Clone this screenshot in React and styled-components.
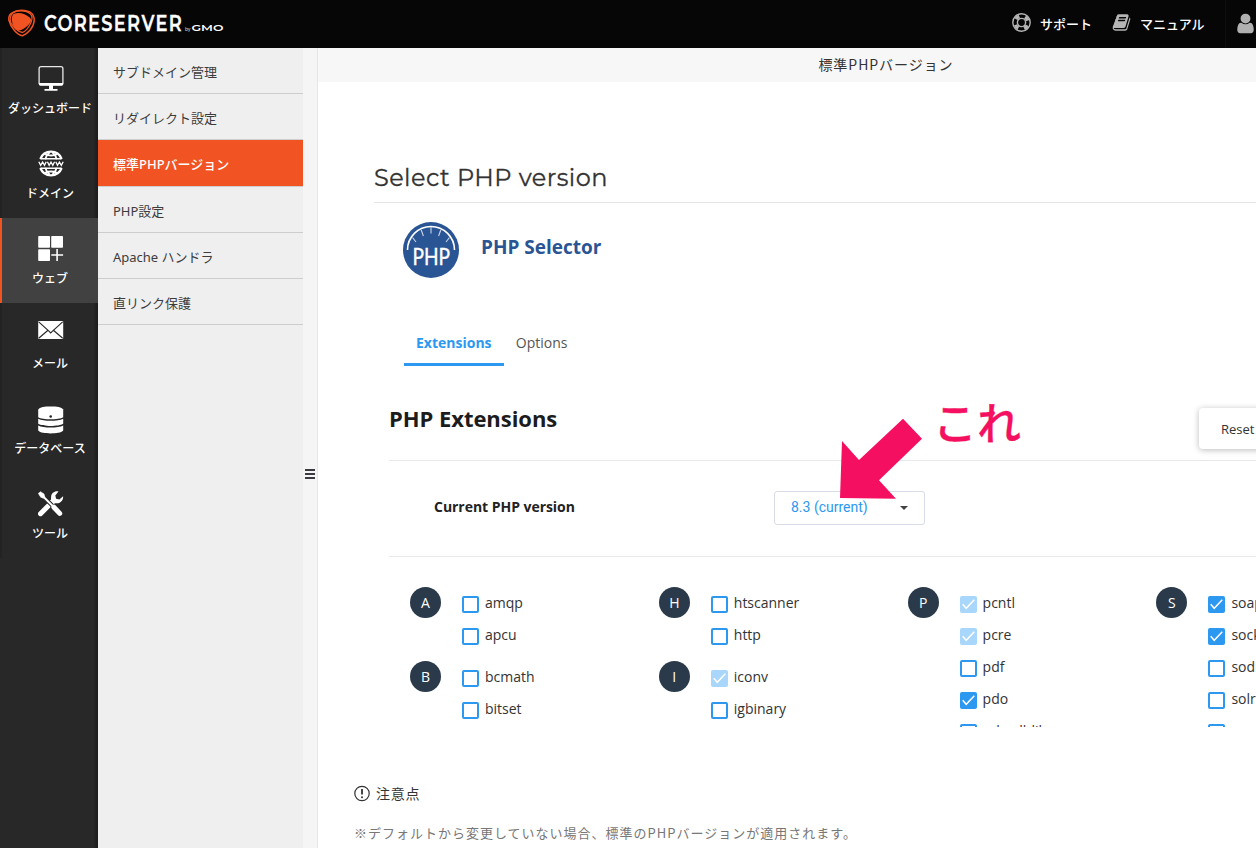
import React from "react";
import styled, { createGlobalStyle, css } from "styled-components";

const Global = createGlobalStyle`
  *, *::before, *::after { box-sizing: border-box; }
  html, body { margin: 0; padding: 0; overflow: hidden; }
  body {
    background: #fff;
    color: #333;
    font-family: "Noto Sans CJK JP", sans-serif;
    font-size: 13px;
  }
`;

const openSans = css`font-family: "Open Sans", "Noto Sans CJK JP", sans-serif;`;

const Page = styled.div`
  position: relative;
  width: 1256px;
  height: 848px;
  overflow: hidden;
  display: flex;
  flex-direction: column;
`;

/* ---------- top bar ---------- */
const TopBar = styled.header`
  flex: none;
  height: 48px;
  background: #060606;
  display: flex;
  align-items: center;
  padding-left: 7px;
`;
const TopLinks = styled.nav`
  margin-left: auto;
  width: 244px;
  height: 48px;
  flex: none;
  display: flex;
  overflow: hidden;
`;
const TopLink = styled.a`
  flex: none;
  display: flex;
  align-items: center;
  width: ${(p) => p.$width}px;
  gap: ${(p) => p.$gap}px;
  color: #fff;
  font-weight: 500;
  font-size: 13px;
  line-height: 48px;
  white-space: nowrap;
  svg { flex: none; position: relative; top: -1.5px; }
`;
const UserBox = styled.div`
  flex: none;
  height: 48px;
  width: 60px;
  padding: 12px 0 0 8px;
  border-left: 1px solid #0a0f18;
`;

/* ---------- columns ---------- */
const Body = styled.div`
  flex: 1;
  display: flex;
  min-height: 0;
`;
const SideNav = styled.nav`
  flex: none;
  width: 98px;
  background: linear-gradient(to left, #1b1b1b, #282828 5px);
`;
const SideItem = styled.a`
  display: flex;
  flex-direction: column;
  align-items: center;
  height: 85px;
  border-left: 2px solid ${(p) => (p.$active ? "#f15322" : "#232323")};
  background: ${(p) => (p.$active ? "#414141" : "transparent")};
  color: #fff;
  font-size: 12px;
  font-weight: 500;
  line-height: 18px;
  white-space: nowrap;
`;
const SideIcon = styled.span`
  height: 51px;
  padding: 17px 0 0 1px;
  svg { display: block; }
`;
const SubNav = styled.nav`
  flex: none;
  width: 205px;
  background: #efefef;
`;
const SubItem = styled.a`
  display: block;
  height: ${(p) => (p.$active ? 47 : 46)}px;
  padding-left: 15px;
  border-bottom: 1px solid #cdcdcd;
  background: ${(p) => (p.$active ? "#f15322" : "transparent")};
  color: ${(p) => (p.$active ? "#fff" : "#3c3c3c")};
  font-family: "Noto Sans", "Noto Sans CJK JP", sans-serif;
  font-weight: ${(p) => (p.$active ? 500 : 400)};
  font-size: 13px;
  line-height: 48px;
`;
const Handle = styled.div`
  flex: none;
  width: 15px;
  padding-left: 2px;
  background: #f5f5f5;
  border-right: 1px solid #e6e6e8;
  display: flex;
  flex-direction: column;
  padding-top: 421px;
  gap: 2px;
`;
const HandleBar = styled.i`
  display: block;
  width: 10px;
  height: 2px;
  background: #3a3a40;
`;

/* ---------- main ---------- */
const Main = styled.main`
  flex: none;
  width: 1136px;
  background: #fff;
`;
const TitleBar = styled.div`
  height: 34px;
  background: #f7f7f7;
  text-align: center;
  font-size: 14px;
  line-height: 33px;
  letter-spacing: 0.95px;
`;
const Frame = styled.section`
  height: 645px;
  padding: 74px 0 0 56px;
  overflow: hidden;
`;
const PageHeading = styled.h1`
  margin: 0;
  height: 47px;
  border-bottom: 1px solid #e3e3e8;
  font-family: Montserrat, Inter, sans-serif;
  font-weight: 400;
  font-size: 24px;
  line-height: 44px;
  letter-spacing: 0.43px;
  color: #333;
  -webkit-text-stroke: 0.3px #333;
`;
const Plugin = styled.div`
  display: flex;
  padding: 19px 0 0 29px;
  height: 122px;
`;
const PluginName = styled.h2`
  ${openSans}
  margin: 10px 0 0 22px;
  font-size: 19px;
  line-height: 30px;
  font-weight: 700;
  color: #2a5594;
`;
const Tabs = styled.div`
  display: flex;
  margin-left: 30px;
  height: 41px;
`;
const Tab = styled.a`
  ${openSans}
  padding: 0 12px;
  height: 41px;
  width: ${(p) => (p.$active ? "99.8px" : "auto")};
  line-height: 36px;
  font-size: 14px;
  white-space: nowrap;
  font-weight: ${(p) => (p.$active ? 700 : 400)};
  color: ${(p) => (p.$active ? "#2c98f0" : "#555")};
  border-bottom: 3px solid ${(p) => (p.$active ? "#2c98f0" : "transparent")};
`;
const Panel = styled.div`
  ${openSans}
  margin-left: 15px;
`;
const PanelHead = styled.div`
  display: flex;
  height: 95px;
  padding-top: 42px;
  border-bottom: 1px solid #e9e9ec;
`;
const PanelTitle = styled.h3`
  margin: 0;
  width: 810px;
  font-size: 22px;
  line-height: 20px;
  letter-spacing: -0.05px;
  font-weight: 700;
  color: #1c1c1c;
`;
const ResetButton = styled.button`
  ${openSans}
  flex: none;
  width: 140px;
  height: 41px;
  padding: 0 0 0 22px;
  border: 0;
  border-radius: 4px;
  background: #fff;
  box-shadow: 0 1px 6px rgba(0, 0, 0, 0.27);
  text-align: left;
  font-size: 13px;
  color: #333;
`;
const VersionRow = styled.div`
  display: flex;
  height: 96px;
  padding: 30px 0 0 45px;
  border-bottom: 1px solid #e9e9ec;
`;
const VersionLabel = styled.label`
  width: 340px;
  font-size: 14px;
  letter-spacing: -0.04px;
  line-height: 32px;
  font-weight: 700;
  color: #222;
`;
const Select = styled.div`
  display: flex;
  align-items: center;
  justify-content: space-between;
  width: 151px;
  height: 34px;
  padding: 0 16px 2px;
  border: 1px solid #d8dbe8;
  border-radius: 3px;
  font-family: Roboto, sans-serif;
  font-size: 14px;
  color: #2c98f0;
  svg { position: relative; top: 1px; }
`;
const Groups = styled.div`
  display: flex;
  height: 171px;
  overflow: hidden;
  padding: 30px 0 0 21px;
`;
const Column = styled.div`
  flex: none;
  width: 248.8px;
`;
const Group = styled.div`
  display: flex;
  margin-bottom: 10px;
`;
const Letter = styled.div`
  flex: none;
  width: 31px;
  height: 31px;
  margin-right: 21px;
  border-radius: 50%;
  background: #2a3a4a;
  color: #fff;
  text-align: center;
  font-size: 14px;
  line-height: 32px;
`;
const Extension = styled.div`
  display: flex;
  height: 32px;
  font-size: 14px;
  line-height: 32px;
  color: #333;
`;
const Box = styled.span`
  flex: none;
  width: 17px;
  height: 17px;
  margin: 9px 6px 0 0;
  border-radius: 2px;
  border: 2px solid #2c98f0;
  ${(p) => p.$state && css`
    border: 0;
    background: ${p.$state === "locked" ? "#a9d6fb" : "#2c98f0"};
  `}
  svg { display: block; }
`;

const Notes = styled.section`
  padding: 34px 0 0 36px;
`;
const NotesTitle = styled.h4`
  display: flex;
  align-items: center;
  gap: 6px;
  height: 64px;
  margin: 0;
  font-size: 14px;
  font-weight: 400;
  letter-spacing: 0.05em;
  svg { flex: none; }
`;
const NoteText = styled.p`
  margin: -2px 0 0;
  font-size: 13px;
  line-height: 20px;
  letter-spacing: 1px;
  color: #777;
`;

/* ---------- annotation over the page ---------- */
const Arrow = styled.svg`
  position: absolute;
  left: 838px;
  top: 416px;
`;
const Callout = styled.div`
  position: absolute;
  left: 933px;
  top: 387px;
  font-size: 44px;
  line-height: 68px;
  font-weight: 500;
  color: #f50f60;
  -webkit-text-stroke: 0.3px #f50f60;
`;

const Logo = () => (
  <svg width="222" height="48" viewBox="0 0 222 48">
    <g fill="none" stroke="#f15322" strokeLinejoin="round">
      <path d="M6 12.500C11 10 18 10 23 12c3 2 4.500 5 4.200 8.500C26.600 28 21 33.500 15.500 35.800 10 35 3.500 27 1.800 20c-.3-4 1.400-6.500 4.200-7.500Z" strokeWidth="1.500" />
      <path d="M9 11.200c5-.9 11-.4 14.500 2.800 2.600 2.400 1.500 7-1 11.500-2 3.500-4.500 6-7 7-4.500-.8-9.500-5-11.700-10C2 17.500 4.300 12.500 9 11.200Z" strokeWidth="1.300" />
    </g>
    <path d="M7 13.700c5-1.800 11.500-.2 16 4 1.500 1.800 1.400 3.500 0 5.200-2.900 4-7.700 7.400-12.400 7.700-3.700-1.900-5.900-7.200-5.700-12.200.1-2.500.6-4.100 2.100-4.700Z" fill="#f15322" />
    <text x="37" y="31" fill="#fff" fontFamily="Montserrat, Lato, sans-serif" fontWeight="600" fontSize="21.500" letterSpacing="1.600" stroke="#fff" strokeWidth=".3" textLength="139" lengthAdjust="spacingAndGlyphs">CORESERVER</text>
    <text x="178" y="31" fill="#ddd" fontFamily="Lato, sans-serif" fontSize="6.500" textLength="5.500" lengthAdjust="spacingAndGlyphs">by</text>
    <text x="184.500" y="31" fill="#fff" fontFamily="Montserrat, Inter, sans-serif" fontWeight="600" fontSize="9.500" textLength="32" lengthAdjust="spacingAndGlyphs">GMO</text>
  </svg>
);

const RingIcon = () => (
  <svg width="19" height="19" viewBox="0 0 19 19" fill="none">
    <circle cx="9.500" cy="9.500" r="8.700" stroke="#b5b5b5" strokeWidth="1.400" />
    <circle cx="9.500" cy="9.500" r="4.100" stroke="#b5b5b5" strokeWidth="1.400" />
    <circle cx="9.500" cy="9.500" r="6.500" stroke="#b5b5b5" strokeWidth="3.600" strokeDasharray="4.200 6.010" strokeDashoffset="-3.005" />
  </svg>
);
const BookIcon = () => (
  <svg width="19" height="19" viewBox="0 0 1792 1792" fill="#b5b5b5">
    <path d="M1703 478q40 57 18 129l-275 906q-19 64-76.500 107.500t-122.500 43.500h-923q-77 0-148.500-53.500t-99.500-131.500q-24-67-2-127 0-4 3-27t4-37q1-8-3-21.500t-3-19.500q2-11 8-21t16.500-23.500 16.500-23.500q23-38 45-91.500t30-91.500q3-10 .5-30t-.5-28q3-11 17-28t17-23q21-36 42-92t25-90q1-9-2.500-32t.5-28q4-13 22-30.500t22-22.500q19-26 42.500-84.500t27.500-96.500q1-8-3-25.500t-2-26.500q2-8 9-18t18-23 17-21q8-12 16.500-30.500t15-35 16-36 19.500-32 26.500-23.500 36-11.500 47.500 5.500l-1 3q38-9 51-9h761q74 0 114 56t18 130l-274 906q-36 119-71.500 153.500t-128.500 34.500h-869q-27 0-38 15-11 16-1 43 24 70 144 70h923q29 0 56-15.500t35-41.500l300-987q7-22 5-57 38 15 59 43zm-1064 2q-4 13 2 22.500t20 9.500h608q13 0 25.500-9.500t16.500-22.500l21-64q4-13-2-22.500t-20-9.500h-608q-13 0-25.500 9.500t-16.500 22.500zm-83 256q-4 13 2 22.500t20 9.500h608q13 0 25.500-9.500t16.500-22.500l21-64q4-13-2-22.500t-20-9.500h-608q-13 0-25.500 9.500t-16.500 22.500z" />
  </svg>
);
const UserIcon = () => (
  <svg width="23" height="23" viewBox="0 0 1792 1792" fill="#b0b0b0">
    <path d="M1536 1399q0 109-62.500 187t-150.500 78h-854q-88 0-150.500-78t-62.500-187q0-85 8.500-160.500t31.500-152 58.500-131 94-89 134.500-34.500q131 128 313 128t313-128q76 0 134.500 34.500t94 89 58.500 131 31.500 152 8.500 160.500zm-256-887q0 159-112.500 271.500t-271.500 112.500-271.500-112.500-112.500-271.500 112.500-271.500 271.500-112.500 271.500 112.500 112.500 271.500z" />
  </svg>
);

const MonitorIcon = () => (
  <svg width="26" height="27" viewBox="0 0 26 27">
    <rect x="1.100" y="1.700" width="23.800" height="18" rx="2" fill="none" stroke="#e8e8e8" strokeWidth="1.300" />
    <path d="M.8 18h24.400v1a1.700 1.700 0 0 1-1.700 1.700h-21A1.700 1.700 0 0 1 .8 19ZM11 20.500h4v3.500h4.500v1.800h-13V24H11Z" fill="#fff" />
  </svg>
);
const GlobeIcon = () => (
  <svg width="26" height="27" viewBox="0 0 26 27">
    <g fill="none" stroke="#fff">
      <path d="M2.300 9a11.500 11.500 0 0 1 21.400 0M2.300 18a11.500 11.500 0 0 0 21.400 0" strokeWidth="2.200" />
      <path d="M2.500 8.700h21M2.500 18.300h21" strokeWidth="1.500" />
      <path d="M7.300 9.200C8 6.500 9.500 4 11.500 2.500M18.700 9.200C18 6.500 16.500 4 14.500 2.500M7.300 17.800c.7 2.700 2.200 5.200 4.200 6.700M18.700 17.800c-.7 2.700-2.200 5.200-4.200 6.700M7 4.200c3.500 1.500 8.500 1.500 12 0M7 22.800c3.500-1.500 8.500-1.500 12 0" strokeWidth="1.800" />
      <path d="M.8 11.700l1.900 3.600 1.900-3.300 1.900 3.300 1.700-3.600M9.400 11.700l1.800 3.600 1.800-3.300 1.800 3.300 1.800-3.600M17.800 11.700l1.700 3.600 1.900-3.300 1.900 3.300 1.900-3.600" strokeWidth="1.300" />
    </g>
  </svg>
);
const WebIcon = () => (
  <svg width="26" height="27" viewBox="0 0 26 27" fill="#fff">
    <rect x=".2" y="1" width="11.800" height="11.800" rx=".8" />
    <rect x="13.200" y="1" width="11.800" height="11.800" rx=".8" />
    <rect x=".2" y="14.200" width="11.800" height="11.800" rx=".8" />
    <path d="M18.300 14h1.600v5.200h5.200v1.600h-5.200V26h-1.600v-5.200h-5V19.200h5Z" />
  </svg>
);
const MailIcon = () => (
  <svg width="26" height="27" viewBox="0 0 26 27">
    <rect x=".2" y="1" width="25" height="18" rx=".8" fill="#fff" />
    <path d="M.7 1.800 10.900 11.200 12.700 12.900l1.800-1.700L24.700 1.800M.7 18.300l9.300-8M24.700 18.300l-9.300-8" fill="none" stroke="#282828" strokeWidth="1.150" />
  </svg>
);
const DatabaseIcon = () => (
  <svg width="26" height="29" viewBox="0.300 -0.500 26 29" fill="#fff">
    <path d="M.5 4C2 1.500 7 1 13 1s11 .5 12.500 3v7.800C21 14.500 5 14.500.5 11.800Z" />
    <path d="M.5 13.200c5 2.700 20 2.700 25 0v5c-4.500 2.900-20.500 2.900-25 0ZM.5 20c5 2.800 20 2.800 25 0v5c-2 2.300-7 2.900-12.500 2.900S2.500 27.300.5 25Z" />
    <circle cx="13" cy="11" r="1.300" fill="#222" />
  </svg>
);
const ToolsIcon = () => (
  <svg width="26" height="27" viewBox="0.300 0 26 27">
    <path d="M2.800 23.700 10.500 16" stroke="#fff" strokeWidth="5" strokeLinecap="round" />
    <path d="M10.500 16l3.500-3.500" stroke="#fff" strokeWidth="3.600" />
    <path d="M20.800 1.500c-3.600-.9-7.200 1.600-7.400 5.200-.1 1.100 0 2-.1 2.700L12 10.800l3.800 3.800 1-1.100c1.100-.4 2.400 0 3.600-.3 3.300-.7 5.300-3.600 5-7l-3.700 3.300-3.300-.7-.8-3.400Z" fill="#fff" />
    <path d="M3 4l13 13" stroke="#282828" strokeWidth="4" />
    <path d="M4 5l12 12" stroke="#fff" strokeWidth="1.900" />
    <path d="M.7 3.400 2.800 1.700 6.300 4l.8 3L5.800 8.300 3 7.200Z" fill="#fff" stroke="#fff" strokeWidth=".6" strokeLinejoin="round" />
    <path d="M16.200 17.200l5.800 6.200" stroke="#fff" strokeWidth="5" strokeLinecap="round" />
  </svg>
);

const PhpBadge = () => (
  <svg width="56" height="56" viewBox="0 0 56 56">
    <circle cx="28" cy="28" r="28" fill="#2a5594" />
    <path d="M4.500 28a23.500 23.500 0 0 1 47 0" fill="none" stroke="#fff" strokeWidth="1.600" />
    <path d="M28 5v6.500M18.200 8l2.200 6M37.800 8l-2.200 6M9.500 15.500l3.500 4.500M46.500 15.500 43 20" stroke="#c9d5e6" strokeWidth="1.100" />
    <text x="9.500" y="42.500" fill="#fff" stroke="#fff" strokeWidth=".4" fontFamily="Lato, sans-serif" fontSize="22.500" textLength="37.500" lengthAdjust="spacingAndGlyphs">PHP</text>
  </svg>
);
const Check = () => (
  <svg width="17" height="17" viewBox="0 0 17 17">
    <path d="M2.700 8.300l3.500 4 8.100-8.600" fill="none" stroke="#fff" strokeWidth="1.500" />
  </svg>
);
const NoticeIcon = () => (
  <svg width="16" height="17" viewBox="0 0 16 17">
    <circle cx="8" cy="8.500" r="7.200" fill="none" stroke="#333" strokeWidth="1.200" />
    <path d="M8 4v5.500" stroke="#333" strokeWidth="1.800" />
    <circle cx="8" cy="12.200" r="1" fill="#333" />
  </svg>
);

const sideItems = [
  ["ダッシュボード", MonitorIcon],
  ["ドメイン", GlobeIcon],
  ["ウェブ", WebIcon],
  ["メール", MailIcon],
  ["データベース", DatabaseIcon],
  ["ツール", ToolsIcon],
];
const subItems = ["サブドメイン管理", "リダイレクト設定", "標準PHPバージョン", "PHP設定", "Apache ハンドラ", "直リンク保護"];

const columns = [
  [["A", [["amqp"], ["apcu"]]], ["B", [["bcmath"], ["bitset"]]]],
  [["H", [["htscanner"], ["http"]]], ["I", [["iconv", "locked"], ["igbinary"]]]],
  [["P", [["pcntl", "locked"], ["pcre", "locked"], ["pdf"], ["pdo", "on"], ["pdo_dblib"]]]],
  [["S", [["soap", "on"], ["sockets", "on"], ["sodium"], ["solr"], ["sourceguardian"]]]],
];

export default function App() {
  return (
    <Page>
      <Global />
      <TopBar>
        <Logo />
        <TopLinks>
          <TopLink $width={100} $gap={9}><RingIcon />サポート</TopLink>
          <TopLink $width={113} $gap={9}><BookIcon />マニュアル</TopLink>
          <UserBox><UserIcon /></UserBox>
        </TopLinks>
      </TopBar>
      <Body>
        <SideNav>
          {sideItems.map(([label, Icon], i) => (
            <SideItem key={label} $active={i === 2}>
              <SideIcon><Icon /></SideIcon>
              {label}
            </SideItem>
          ))}
        </SideNav>
        <SubNav>
          {subItems.map((label, i) => (
            <SubItem key={label} $active={i === 2}>{label}</SubItem>
          ))}
        </SubNav>
        <Handle><HandleBar /><HandleBar /><HandleBar /></Handle>
        <Main>
          <TitleBar>標準PHPバージョン</TitleBar>
          <Frame>
            <PageHeading>Select PHP version</PageHeading>
            <Plugin>
              <PhpBadge />
              <PluginName>PHP Selector</PluginName>
            </Plugin>
            <Tabs>
              <Tab $active>Extensions</Tab>
              <Tab>Options</Tab>
            </Tabs>
            <Panel>
              <PanelHead>
                <PanelTitle>PHP Extensions</PanelTitle>
                <ResetButton>Reset</ResetButton>
              </PanelHead>
              <VersionRow>
                <VersionLabel>Current PHP version</VersionLabel>
                <Select>
                  8.3 (current)
                  <svg width="8" height="4" viewBox="0 0 8 4"><path d="M0 0h8L4 4Z" fill="#444" /></svg>
                </Select>
              </VersionRow>
              <Groups>
                {columns.map((groups, i) => (
                  <Column key={i}>
                    {groups.map(([letter, items]) => (
                      <Group key={letter}>
                        <Letter>{letter}</Letter>
                        <div>
                          {items.map(([name, state]) => (
                            <Extension key={name}>
                              <Box $state={state}>{state && <Check />}</Box>
                              {name}
                            </Extension>
                          ))}
                        </div>
                      </Group>
                    ))}
                  </Column>
                ))}
              </Groups>
            </Panel>
          </Frame>
          <Notes>
            <NotesTitle><NoticeIcon />注意点</NotesTitle>
            <NoteText>※デフォルトから変更していない場合、標準のPHPバージョンが適用されます。</NoteText>
          </Notes>
        </Main>
      </Body>
      <Arrow width="86" height="86" viewBox="838 416 86 86">
        <path d="M903 418.700 922 438.700 879 480.300 896 498.800 840 498 842 441 859 460Z" fill="#f50f60" />
      </Arrow>
      <Callout>これ</Callout>
    </Page>
  );
}
